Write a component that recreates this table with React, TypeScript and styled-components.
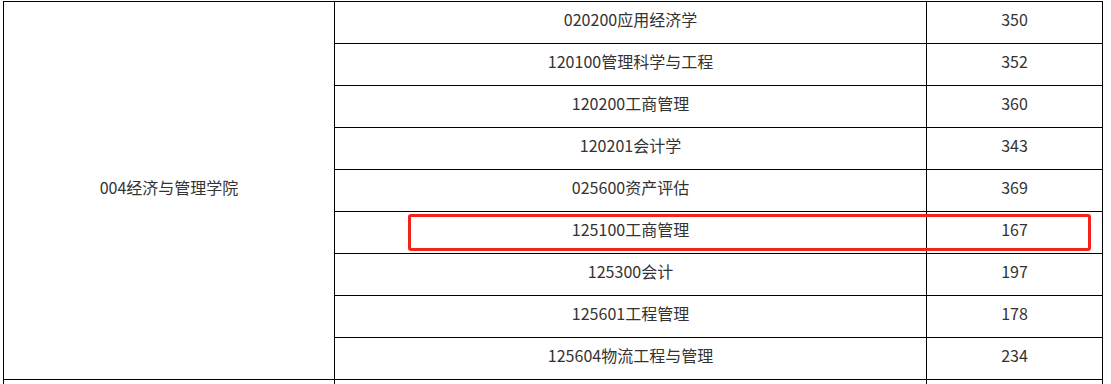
import React from "react";
import styled, { createGlobalStyle } from "styled-components";

const Global = createGlobalStyle`
  html, body { margin: 0; padding: 0; background: #fff; overflow: hidden; }
  body { font-family: "Noto Sans CJK SC", "Noto Sans", sans-serif; }
`;

const Wrap = styled.div`
  position: relative;
  margin: 1px 0 0 3px;
  width: 1100px;
`;

const Table = styled.table`
  border-collapse: collapse;
  table-layout: fixed;
  width: 1100px;
  color: #333;
  font-size: 16px;
`;

const Cell = styled.td`
  border: 1px solid #000;
  height: 41px;
  padding: 0;
  text-align: center;
  vertical-align: middle;
  line-height: 20px;
`;

const Label = styled.span`
  position: relative;
  top: -4px;
`;

const Highlight = styled.div`
  position: absolute;
  left: 405px;
  top: 213px;
  width: 683px;
  height: 37px;
  border: 3px solid #f5231b;
  border-radius: 3px;
  box-sizing: border-box;
  pointer-events: none;
`;

const rows: [string, string][] = [
  ["020200应用经济学", "350"],
  ["120100管理科学与工程", "352"],
  ["120200工商管理", "360"],
  ["120201会计学", "343"],
  ["025600资产评估", "369"],
  ["125100工商管理", "167"],
  ["125300会计", "197"],
  ["125601工程管理", "178"],
  ["125604物流工程与管理", "234"],
];

export default function App() {
  return (
    <>
      <Global />
      <Wrap>
        <Table>
          <colgroup>
            <col style={{ width: 331 }} />
            <col style={{ width: 592 }} />
            <col style={{ width: 176 }} />
          </colgroup>
          <tbody>
            {rows.map(([major, score], i) => (
              <tr key={major}>
                {i === 0 && (
                  <Cell rowSpan={rows.length}>
                    <Label>004经济与管理学院</Label>
                  </Cell>
                )}
                <Cell>
                  <Label>{major}</Label>
                </Cell>
                <Cell>
                  <Label>{score}</Label>
                </Cell>
              </tr>
            ))}
            <tr>
              <Cell />
              <Cell />
              <Cell />
            </tr>
          </tbody>
        </Table>
        <Highlight />
      </Wrap>
    </>
  );
}
